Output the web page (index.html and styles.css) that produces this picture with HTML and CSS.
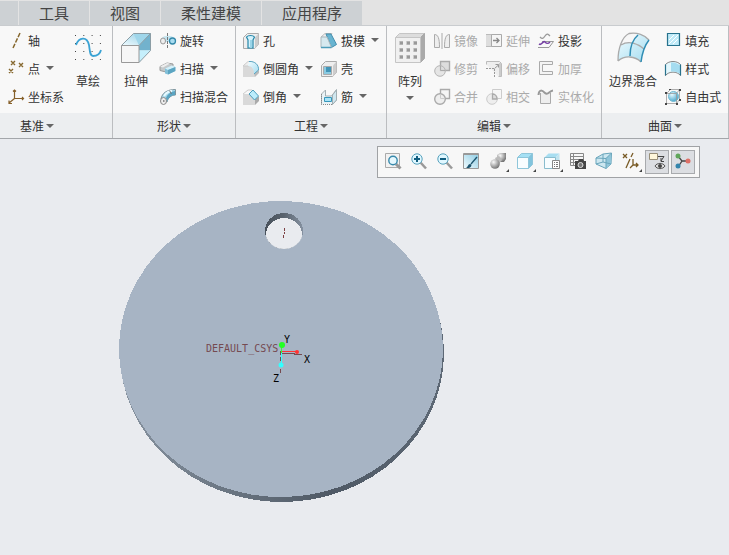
FILE: index.html
```
<!DOCTYPE html>
<html lang="zh-CN">
<head>
    <meta charset="UTF-8">
    <meta name="viewport" content="width=device-width, initial-scale=1.0">
    <title>零件建模</title>
    <link rel="stylesheet" href="styles.css">
</head>
<body>

<!-- Shared gradients -->
<svg class="defs" aria-hidden="true">
    <defs>
        <linearGradient id="blue" x1="0" y1="0" x2="1" y2="1">
            <stop offset="0" stop-color="#f2fcff"/>
            <stop offset="1" stop-color="#a2dcf0"/>
        </linearGradient>
        <linearGradient id="sky" x1="1" y1="0" x2="0" y2="1">
            <stop offset="0" stop-color="#8ccbe3"/>
            <stop offset="1" stop-color="#f2fcff"/>
        </linearGradient>
        <radialGradient id="ball" cx="0.35" cy="0.3" r="0.7">
            <stop offset="0" stop-color="#fafafa"/>
            <stop offset="1" stop-color="#777"/>
        </radialGradient>
        <radialGradient id="blue-ball" cx="0.35" cy="0.3" r="0.8">
            <stop offset="0" stop-color="#e6f9ff"/>
            <stop offset="1" stop-color="#3aa0c8"/>
        </radialGradient>
        <linearGradient id="edge">
            <stop offset="0" stop-color="#8793a0"/>
            <stop offset="0.65" stop-color="#4f5965"/>
            <stop offset="1" stop-color="#5d6875"/>
        </linearGradient>
        <linearGradient id="bore">
            <stop offset="0" stop-color="#48515b"/>
            <stop offset="0.5" stop-color="#59636e"/>
            <stop offset="1" stop-color="#8591a0"/>
        </linearGradient>
    </defs>
</svg>

<nav class="tabs">
    <button type="button" class="tab tab-cut" aria-label="上一个"></button>
    <button type="button" class="tab">工具</button>
    <button type="button" class="tab">视图</button>
    <button type="button" class="tab">柔性建模</button>
    <button type="button" class="tab">应用程序</button>
</nav>

<div class="ribbon">
    <section class="group group-cut">
        <div class="group-body">
            <div class="column">
                <button type="button" class="tool">
                    <svg class="icon" viewBox="0 0 16 16"><path d="M12 0L5 15" fill="none" stroke="#86682f" stroke-width="1.5" stroke-dasharray="4.5 1.5"/></svg>
                    轴
                </button>
                <button type="button" class="tool">
                    <svg class="icon" viewBox="0 0 16 16"><path d="M3 0l4 4M7 0l-4 4M11 2l4 4M15 2l-4 4M1 8l4 4M5 8l-4 4" stroke="#86682f" stroke-width="1.4"/></svg>
                    点<span class="caret"></span>
                </button>
                <button type="button" class="tool">
                    <svg class="icon" viewBox="0 0 16 16"><path d="M6.5 1v8.500H15M6.500 9.500L1 14M5 2.500L6.500 1 8 2.500M14 8l1.500 1.500L14 11M1 11.500v3h3" fill="none" stroke="#86602a" stroke-width="1.2"/></svg>
                    坐标系
                </button>
            </div>
            <button type="button" class="big">
                <svg class="big-icon" viewBox="0 0 30 30">
                    <path d="M2 2.500h26M2 10.500h26M2 18.500h26M2 26.500h26" stroke="#444" stroke-dasharray="1 7.300"/>
                    <path d="M3 12C6 4 14 3 16 12C17 19 17 23 20 23C24 23 27 21 28 17" fill="none" stroke="#3ba3d4" stroke-width="1.8"/>
                </svg>
                草绘
            </button>
        </div>
        <button type="button" class="group-title">基准<span class="caret"></span></button>
    </section>

    <section class="group">
        <div class="group-body">
            <button type="button" class="big">
                <svg class="big-icon" viewBox="0 0 30 30">
                    <path d="M.5 12.500L12.500.5h17L18 12.500z" fill="url(#sky)"/>
                    <path d="M12.500.5h17L18 12.500z" fill="#9fd6ea"/>
                    <path d="M29.500.5v17L18 17.500v-5z" fill="#72b2cd"/>
                    <path d="M18 17.500h11.500L18 29.500z" fill="#c5effc"/>
                    <path d="M.5 12.500L12.500.5h17v17L18 29.500M18 12.500L29.500.5" fill="none" stroke="#8b9da5"/>
                    <path d="M.5 12.500H18v17H.5z" fill="#f6f6f6" stroke="#999"/>
                </svg>
                拉伸
            </button>
            <div class="column">
                <button type="button" class="tool">
                    <svg class="icon" viewBox="0 0 16 16">
                        <path d="M2 5C4 2 12 2 14 5v4H2z" fill="#c4e4ef"/>
                        <ellipse cx="3" cy="8" rx="2.500" ry="3" fill="#eee" stroke="#999"/>
                        <circle cx="12.500" cy="8" r="3" fill="#a8dcf0" stroke="#3489aa" stroke-width="1.3"/>
                        <path d="M7.500 0v16" stroke="#777" stroke-dasharray="3 1"/>
                    </svg>
                    旋转
                </button>
                <button type="button" class="tool">
                    <svg class="icon" viewBox="0 0 16 16">
                        <path d="M0 5.500L7 2l6 1v3L6 8v3L0 9.500z" fill="#c4c9cb" stroke="#999"/>
                        <path d="M5 7.500l10-2V10l-7 3.500-3-1z" fill="#83c0d8"/>
                        <path d="M5 7.500l7-3 3.500 1.500L8 9z" fill="#d3f1fb"/>
                        <path d="M8 9l7.500-3v4L8 13.500z" fill="#5ca5c2"/>
                        <path d="M0 5.500L7 2l3 .5L3 6.500z" fill="#eee"/>
                    </svg>
                    扫描<span class="caret"></span>
                </button>
                <button type="button" class="tool">
                    <svg class="icon" viewBox="0 0 16 16">
                        <path d="M1 10C2 4 7 .5 15.500.5V6C11 6 8 9 7 13z" fill="#a9d9ea" stroke="#7d949d"/>
                        <path d="M6 9C7 6 10 3 15 2v4c-4 0-7 3-8 7z" fill="#5aa5c3"/>
                        <path d="M4 7C6 4 8 2 12 2" fill="none" stroke="#e8faff" stroke-width="2"/>
                        <path d="M9.500 1.500l2 3.500" stroke="#777"/>
                        <ellipse cx="3.500" cy="12" rx="3" ry="3.500" fill="#eee" stroke="#888"/>
                        <path d="M3 12h1.500" stroke="#333"/>
                    </svg>
                    扫描混合
                </button>
            </div>
        </div>
        <button type="button" class="group-title">形状<span class="caret"></span></button>
    </section>

    <section class="group">
        <div class="group-body">
            <div class="column">
                <button type="button" class="tool">
                    <svg class="icon" viewBox="0 0 16 16">
                        <path d="M.5 4.500l4-4h11v11l-4 4H.5z" fill="#eee" stroke="#aaa"/>
                        <path d="M12 4.500l3.500-4v11l-3.500 4z" fill="#ccc"/>
                        <path d="M3.500 4C5 2 10 2 11.500 4L10 7v8H5V7z" fill="#d3f2fc" stroke="#2687a9" stroke-width="1.2"/>
                        <path d="M8 7v8" stroke="#9cd5e8" stroke-width="2"/>
                    </svg>
                    孔
                </button>
                <button type="button" class="tool">
                    <svg class="icon" viewBox="0 0 16 16">
                        <path d="M0 5h8l4 5v6H0z" fill="#d9d9d9"/>
                        <path d="M11 12l5-4v4l-4 4z" fill="#bbb"/>
                        <path d="M0 5L5 .5h4L6 5z" fill="#eee" stroke="#ccc"/>
                        <path d="M6 .5C12 0 16 4 15.500 9L11 13C11 8 9 5 5 5z" fill="url(#blue)"/>
                        <path d="M6 .5C12 0 16 4 15.500 9L11 13" fill="none" stroke="#5ba6c2"/>
                    </svg>
                    倒圆角<span class="caret"></span>
                </button>
                <button type="button" class="tool">
                    <svg class="icon" viewBox="0 0 16 16">
                        <path d="M0 5h7l5 5v6H0z" fill="#d9d9d9"/>
                        <path d="M12 10l4-3v5l-4 4z" fill="#aaa"/>
                        <path d="M0 5L5 1h4" fill="none" stroke="#ccc"/>
                        <path d="M10 1l5.500 6-4 4L6 5z" fill="#bcecfb" stroke="#4c9ebc"/>
                    </svg>
                    倒角<span class="caret"></span>
                </button>
            </div>
            <div class="column">
                <button type="button" class="tool">
                    <svg class="icon" viewBox="0 0 16 16">
                        <path d="M0 4L4 .5h7L7 5z" fill="#eee" stroke="#bbb"/>
                        <path d="M5 1h5l5.500 10.500-5 3z" fill="#68b4d1" stroke="#438ead"/>
                        <path d="M0 4h6l4.500 10.500H0z" fill="#d6e9ef" stroke="#aab9be"/>
                        <path d="M0 14.500h10.500" stroke="#4d9dba" stroke-width="1.5"/>
                    </svg>
                    拔模<span class="caret"></span>
                </button>
                <button type="button" class="tool">
                    <svg class="icon" viewBox="0 0 16 16">
                        <path d="M.5 4.500l4-4h11v11l-4 4H.5z" fill="#eee" stroke="#aaa"/>
                        <path d="M12 4.500l3.500-4v11l-3.500 4z" fill="#ccc"/>
                        <path d="M2.500 5.500h8v8h-8z" fill="#8acae1" stroke="#aaa"/>
                        <path d="M5 6h5v5H5z" fill="#4395b7"/>
                    </svg>
                    壳
                </button>
                <button type="button" class="tool">
                    <svg class="icon" viewBox="0 0 16 16">
                        <path d="M.5 15.500V5l4-4v6h6l5-6.500V11l-4 4.500" fill="#e9f2f5" stroke="#a3afb3"/>
                        <path d="M11.500 15.500V6l4-5v10z" fill="#d0e7ef" stroke="#a3afb3"/>
                        <path d="M.5 5v10.500h11" fill="none" stroke="#888" stroke-dasharray="1 1"/>
                        <path d="M3.500 8.500h7v4h-7z" fill="#a8e3f7" stroke="#3797ba"/>
                    </svg>
                    筋<span class="caret"></span>
                </button>
            </div>
        </div>
        <button type="button" class="group-title">工程<span class="caret"></span></button>
    </section>

    <section class="group">
        <div class="group-body">
            <button type="button" class="big">
                <svg class="big-icon" viewBox="0 0 30 30">
                    <path d="M.5 4.500l4-4h25l-4 4z" fill="#ddd" stroke="#c5c5c5"/>
                    <path d="M25.500 4.500l4-4v25l-4 4z" fill="#aaa" stroke="#aaa"/>
                    <path d="M.5 4.500h25v25H.5z" fill="#f0f0f0" stroke="#c5c5c5"/>
                    <path d="M4 10h18M4 17h18M4 24h18" stroke="#ccc" stroke-width="4" stroke-dasharray="4 3"/>
                    <path d="M5 10h17M5 17h17M5 24h17" stroke="#999" stroke-width="3" stroke-dasharray="3 4"/>
                </svg>
                阵列<span class="caret"></span>
            </button>
            <div class="column">
                <button type="button" class="tool" disabled>
                    <svg class="icon" viewBox="0 0 16 16"><path d="M.5 1.500C4 1.500 5.500 5 5.500 14.500h-5zM15.500 1.500C12 1.500 10.500 5 10.500 14.500h5z" fill="#eee" stroke="#aaa"/><path d="M8 0v16" stroke="#aaa"/></svg>
                    镜像
                </button>
                <button type="button" class="tool" disabled>
                    <svg class="icon" viewBox="0 0 16 16"><path d="M6.500.5h9v9h-9z" fill="#ddd" stroke="#aaa" stroke-width="1.4"/><circle cx="6" cy="10" r="5.300" fill="#ddd" fill-opacity=".7" stroke="#b5b5b5"/><path d="M6.500 5v4.500H11" fill="none" stroke="#aaa"/></svg>
                    修剪
                </button>
                <button type="button" class="tool" disabled>
                    <svg class="icon" viewBox="0 0 16 16"><path d="M6.500.5h9v9h-9z" fill="#f5f5f5" stroke="#aaa" stroke-width="1.4"/><circle cx="6" cy="10" r="5.300" fill="#eee" stroke="#aaa" stroke-width="1.4"/><path d="M6.500 5v4.500H11" fill="none" stroke="#ccc"/></svg>
                    合并
                </button>
            </div>
            <div class="column">
                <button type="button" class="tool" disabled>
                    <svg class="icon" viewBox="0 0 16 16"><path d="M0 1.500h6M0 13.500h6" stroke="#bbb"/><path d="M0 2h5v11H0z" fill="#ddd"/><path d="M5.500 1.500h10v12h-10z" fill="#f5f5f5" stroke="#aaa"/><path d="M7 7.500h6M10.500 5l2.500 2.500-2.500 2.500" fill="none" stroke="#888" stroke-width="1.3"/></svg>
                    延伸
                </button>
                <button type="button" class="tool" disabled>
                    <svg class="icon" viewBox="0 0 16 16"><path d="M.5 3.500v-3h13l2 2v13h-3" fill="#eee" stroke="#bbb"/><path d="M13 2h2v13h-2z" fill="#ccc"/><path d="M0 7.500h8.500V16" fill="none" stroke="#999" stroke-dasharray="2 1"/><path d="M8.500 7.500L12.500 4M9.500 3.500h3v3" fill="none" stroke="#999"/></svg>
                    偏移
                </button>
                <button type="button" class="tool" disabled>
                    <svg class="icon" viewBox="0 0 16 16"><path d="M6.500.5h9v9h-9z" fill="#f6f6f6" stroke="#ccc"/><circle cx="6" cy="10" r="5.300" fill="#eee" stroke="#ccc"/><path d="M6.500 5v5H11C11 7 9 5 6.500 5z" fill="#ddd" stroke="#aaa" stroke-width="1.3"/></svg>
                    相交
                </button>
            </div>
            <div class="column">
                <button type="button" class="tool">
                    <svg class="icon" viewBox="0 0 16 16">
                        <path d="M2 4C4 6 5 6 7 3S10 1 12 3" fill="none" stroke="#999" stroke-width="1.3"/>
                        <path d="M4 8.500h11.500L11 14.500H0" fill="none" stroke="#999"/>
                        <path d="M1 11C4 13 5 7 7 9S10 11 12 9" fill="none" stroke="#7640a5" stroke-width="1.6"/>
                    </svg>
                    投影
                </button>
                <button type="button" class="tool" disabled>
                    <svg class="icon" viewBox="0 0 16 16"><path d="M14.500.5H1.500v13h13v-3h-10v-7h10z" fill="#f4f4f4" stroke="#aaa"/></svg>
                    加厚
                </button>
                <button type="button" class="tool" disabled>
                    <svg class="icon" viewBox="0 0 16 16"><path d="M2.500 4v10.500h10V4" fill="#eee" stroke="#aaa"/><path d="M.5 6C1 0 4 1 7 4S11 2 15 1.500" fill="none" stroke="#999" stroke-width="2"/></svg>
                    实体化
                </button>
            </div>
        </div>
        <button type="button" class="group-title">编辑<span class="caret"></span></button>
    </section>

    <section class="group">
        <div class="group-body">
            <button type="button" class="big">
                <svg class="big-icon" viewBox="0 0 30 30">
                    <path d="M0 28C0 15 4 4 11 .5C19-1 27 2 31 7C27 12 24 21 23 29C17 23 7 22 0 28z" fill="url(#blue)"/>
                    <path d="M2 13C5 6 8 1 11 .5C15 0 17 1 20 2L14 10C10 9 6 10 2 13z" fill="#f7f7f7"/>
                    <path d="M0 28C0 15 4 4 11 .5C19-1 27 2 31 7M0 28C7 22 17 23 23 29M3 12C11 7 20 11 26 16" fill="none" stroke="#aaa" stroke-width="1.3"/>
                    <path d="M20 2C14 7 12 16 12 23M31 7C27 12 24 21 23 29" fill="none" stroke="#2f8db4" stroke-width="1.5"/>
                </svg>
                边界混合
            </button>
            <div class="column">
                <button type="button" class="tool">
                    <svg class="icon" viewBox="0 0 16 16"><path d="M2.500.5h12v12h-12z" fill="#bfeaf8" stroke="#28728d" stroke-width="1.2"/><path d="M4 7l5-5M4 11l9-9M8 11l5-5" stroke="#fff"/></svg>
                    填充
                </button>
                <button type="button" class="tool">
                    <svg class="icon" viewBox="0 0 16 16"><path d="M.5 3.500C4-.5 12-.5 15.500 3.500v11C12 10 4 10 .5 14.500z" fill="#e3f7fd" stroke="#888"/><path d="M6 1.500c4-.5 7 1 9 3V13c-2-2-5-2.500-9-2.500z" fill="#a5dcf0"/><path d="M.5 14.500v-11M15.500 14.500v-11" stroke="#28728d" stroke-width="1.2"/></svg>
                    样式
                </button>
                <button type="button" class="tool">
                    <svg class="icon" viewBox="0 0 16 16"><circle cx="8.500" cy="7.500" r="5" fill="url(#blue-ball)" stroke="#72b9d2"/><path d="M1.500 4.500h10v10h-10zM1.500 4.500l4-4h9v10l-3 4M11.500 4.500l3-4" fill="none" stroke="#999" stroke-width=".8"/><path d="M0 3h2v2H0zM0 14h2v2H0zM11 14h2v2h-2zM14 0h2v2h-2zM4 0h2v1H4zM14 10h2v2h-2z" fill="#444"/></svg>
                    自由式
                </button>
            </div>
        </div>
        <button type="button" class="group-title">曲面<span class="caret"></span></button>
    </section>
</div>

<main class="viewport">
    <div class="view-toolbar">
        <button type="button" class="view-button" aria-label="重新调整">
            <svg class="icon" viewBox="0 0 16 16"><path d="M.5.5h14v14H.5z" fill="#f2f2f2" stroke="#aaa"/><path d="M11 11l4.500 4.500" stroke="#999" stroke-width="3"/><circle cx="8" cy="7.500" r="4.200" fill="#e6f8fe" stroke="#3889ab" stroke-width="1.4"/></svg>
        </button>
        <button type="button" class="view-button" aria-label="放大">
            <svg class="icon" viewBox="0 0 16 16"><path d="M9.500 9.500l5.500 6" stroke="#999" stroke-width="2.500"/><circle cx="6" cy="6" r="5.200" fill="#e0f7ff" stroke="#58a2bd"/><path d="M3 6h6M6 3v6" stroke="#125e80" stroke-width="2"/></svg>
        </button>
        <button type="button" class="view-button" aria-label="缩小">
            <svg class="icon" viewBox="0 0 16 16"><path d="M9.500 9.500l5.500 6" stroke="#999" stroke-width="2.500"/><circle cx="6" cy="6" r="5.200" fill="#e0f7ff" stroke="#58a2bd"/><path d="M3 6h6" stroke="#125e80" stroke-width="2"/></svg>
        </button>
        <button type="button" class="view-button" aria-label="重画">
            <svg class="icon" viewBox="0 0 16 16"><path d="M.5.5h15v15H.5z" fill="url(#sky)" stroke="#999"/><path d="M1 1.500h14" stroke="#999"/><path d="M8 11l6-7" fill="none" stroke="#1c536d" stroke-width="1.3"/><path d="M3 15c2-1 2-4 4-4s2 3-1 4z" fill="#1c536d"/></svg>
        </button>
        <button type="button" class="view-button has-menu" aria-label="显示样式">
            <svg class="icon" viewBox="0 0 16 16"><path d="M7 2l3-2h6v6l-2 3H7z" fill="url(#ball)"/><path d="M5 5l4-2 3 4-4 5z" fill="#bbb"/><circle cx="5" cy="11" r="4.800" fill="url(#ball)"/></svg>
        </button>
        <button type="button" class="view-button has-menu" aria-label="已保存方向">
            <svg class="icon" viewBox="0 0 16 16"><path d="M.5 4.500l4-4h11l-4 4z" fill="#a5e0f4"/><path d="M11.500 4.500l4-4v11l-4 4z" fill="#82c4dd"/><path d="M.5 4.500h11v11H.5zM.5 4.500l4-4h11v11l-4 4M11.500 4.500l4-4" fill="none" stroke="#8fc6da"/><path d="M1 5h10v10H1z" fill="#f8fdff"/></svg>
        </button>
        <button type="button" class="view-button has-menu" aria-label="视图管理器">
            <svg class="icon" viewBox="0 0 16 16"><path d="M.5 4.500l4-4h11l-4 4z" fill="#a8def1"/><path d="M11.500 4.500l4-4v11l-4 4z" fill="#c0e4f0"/><path d="M.5 4.500h11v11H.5z" fill="#f8fdff" stroke="#8abdce"/><path d="M8.500 7.500h7v8h-7z" fill="#fff" stroke="#888"/><path d="M10 9.500h1M12 9.500h2M10 11.500h1M12 11.500h2M10 13.500h1M12 13.500h2" stroke="#777"/></svg>
        </button>
        <button type="button" class="view-button" aria-label="视图快照">
            <svg class="icon" viewBox="0 0 16 16"><path d="M.5.5h13v12H.5zM.5 3.500h13M.5 6.500h13M.5 9.500h13M3.500.5v12" fill="none" stroke="#888"/><path d="M5 8h3l1-2h4l1 2h2v8H5z" fill="#444"/><circle cx="10.500" cy="12" r="2.500" fill="#777" stroke="#ddd"/></svg>
        </button>
        <button type="button" class="view-button" aria-label="透视图">
            <svg class="icon" viewBox="0 0 16 16"><path d="M0 5L7 1l8.500-1L15 11l-5 4.500L0 11z" fill="#cde7f0" stroke="#69a5bb"/><path d="M10 5l5-4v10l-5 4z" fill="#8fc5d9"/><path d="M0 5l10 .5v10M10 5.500L15.500 0M0 11l7-2 8 2M7 9V1" fill="none" stroke="#69a5bb"/></svg>
        </button>
        <button type="button" class="view-button has-menu" aria-label="基准显示过滤器">
            <svg class="icon" viewBox="0 0 16 16"><path d="M0 1l4 4M4 1L0 5M10 0L8 4M7 6L3 15M10 6v6h5M10 12l-3 3M13 10l2 2-2 2" fill="none" stroke="#785a25" stroke-width="1.3"/></svg>
        </button>
        <button type="button" class="view-button active" aria-label="注释显示" aria-pressed="true">
            <svg class="icon" viewBox="0 0 16 16"><path d="M.5.5h8v6h-8z" fill="#fff7db" stroke="#998f78"/><path d="M9 3.500h6L12 8M12 5v3.500h3" fill="none" stroke="#444"/><path d="M6 13C8 9.500 14 9.500 16 13C14 16.500 8 16.500 6 13z" fill="#ddd" stroke="#555"/><circle cx="11" cy="13" r="2" fill="#444"/></svg>
        </button>
        <button type="button" class="view-button active" aria-label="旋转中心" aria-pressed="true">
            <svg class="icon" viewBox="0 0 16 16"><path d="M3 3l4 5-4 6M7 8h6" fill="none" stroke="#444" stroke-width="1.3"/><circle cx="3" cy="3" r="2.500" fill="#60a65b"/><circle cx="3" cy="13" r="2.500" fill="#3485ac"/><circle cx="13" cy="8" r="2.500" fill="#de7067"/></svg>
        </button>
    </div>

    <svg class="model" viewBox="0 0 326 304" role="img" aria-label="零件模型">
        <g shape-rendering="crispEdges">
            <!-- Disc: side wall, then front face -->
            <ellipse cx="163" cy="153" rx="162" ry="149" fill="url(#edge)"/>
            <ellipse cx="162" cy="149" rx="162" ry="148" fill="#a7b4c4"/>
            <!-- Through hole -->
            <clipPath id="hole"><ellipse cx="165" cy="31" rx="19" ry="18"/></clipPath>
            <ellipse cx="165" cy="31" rx="19" ry="18" fill="url(#bore)"/>
            <ellipse cx="165" cy="35" rx="18" ry="17" fill="#e9ebef" clip-path="url(#hole)"/>
            <path d="M165.500 28v3M165.500 32v2M164.500 35v3" stroke="#7b3f42"/>
            <!-- Datum axes and spin centre -->
            <path d="M162 153.500h14M175 154.500h8" stroke="#754a50"/>
            <path d="M161.500 151v23" stroke="#754a50" stroke-dasharray="4 2"/>
            <path d="M162 151.500h15" stroke="#f33"/>
            <path d="M162.500 146v7" stroke="#3f3"/>
            <path d="M162.500 153v11" stroke="#3ff"/>
        </g>
        <circle cx="163" cy="145" r="3" fill="#2f2"/>
        <circle cx="178" cy="152" r="2" fill="#f33"/>
        <circle cx="162" cy="165" r="2.500" fill="#3ff"/>
        <text class="csys-name" x="87" y="152">DEFAULT_CSYS</text>
        <text class="axis-name" x="165" y="143">Y</text>
        <text class="axis-name" x="185" y="163">X</text>
        <text class="axis-name" x="154" y="182">Z</text>
    </svg>
</main>

</body>
</html>
```
FILE: styles.css
```
* {
    box-sizing: border-box;
}

body {
    margin: 0;
    min-height: 100vh;
    display: flex;
    flex-direction: column;
    font-family: "Noto Sans CJK SC", sans-serif;
    font-size: 12px;
    line-height: 16px;
    color: #333;
    background-color: #e9ebef;
}

button {
    margin: 0;
    padding: 0;
    border: none;
    background: none;
    font: inherit;
    color: inherit;
    white-space: nowrap;
    cursor: pointer;
}

.defs {
    position: absolute;
    width: 0;
    height: 0;
}

/* Tabs */
.tabs {
    display: flex;
    gap: 1px;
    height: 26px;
    padding-top: 1px;
    background-color: #e3e3e3;
    border-bottom: 1px solid #c9cccf;
}

.tab {
    padding: 0 20px;
    font-size: 15px;
    line-height: 24px;
    color: #444;
    background-color: #cdd1d4;
}

.tab-cut {
    width: 18px;
    padding: 0;
}

/* Ribbon */
.ribbon {
    display: flex;
    background-color: #f8f8f8;
    border-bottom: 1px solid #a3a6aa;
}

.group {
    display: flex;
    flex-direction: column;
    border-right: 1px solid #bbbdc0;
}

.group-body {
    display: flex;
    gap: 8px;
    padding: 1px 7px 2px;
}

.column {
    display: flex;
    flex-direction: column;
}

.tool {
    display: flex;
    align-items: center;
    gap: 4px;
    height: 28px;
}

.tool:disabled {
    color: #aaa;
    cursor: default;
}

.tool .caret {
    margin-left: 2px;
    margin-bottom: 2px;
}

.icon {
    flex: none;
    width: 16px;
    height: 16px;
    overflow: visible;
}

.big {
    display: flex;
    flex-direction: column;
    align-items: center;
    min-width: 32px;
    padding-top: 6px;
}

.big-icon {
    width: 30px;
    height: 30px;
    margin-bottom: 10px;
    overflow: visible;
}

.big .caret {
    margin-top: 7px;
}

.caret {
    border: 4px solid transparent;
    border-top-color: #666;
    border-bottom: none;
}

.group-title {
    display: flex;
    justify-content: center;
    align-items: center;
    gap: 2px;
    height: 25px;
    background-color: #eceef0;
}

/* The first group runs off the left side of the window */
.group-cut .group-body {
    padding-left: 8px;
    padding-right: 8px;
}

.group-cut .group-title {
    padding-right: 38px;
}

/* Graphics area */
.viewport {
    position: relative;
    flex: 1;
    padding: 61px 0 0 119px;
}

.view-toolbar {
    position: absolute;
    top: 7px;
    right: 29px;
    display: flex;
    gap: 2px;
    padding: 3px 4px 3px 3px;
    background-color: #f7f7f7;
    border: 1px solid #a0a2a5;
}

.view-button {
    position: relative;
    display: flex;
    justify-content: center;
    align-items: center;
    width: 24px;
    height: 24px;
    padding-bottom: 2px;
}

.view-button.has-menu {
    width: 25px;
}

.has-menu::after {
    content: "";
    position: absolute;
    right: 1px;
    bottom: 2px;
    border-left: 3px solid transparent;
    border-bottom: 3px solid #444;
}

.view-button.active {
    background-color: #dcdee2;
    border: 1px solid #a8aaad;
}

.model {
    display: block;
    width: 326px;
    height: 304px;
}

.csys-name,
.axis-name {
    font-family: "DejaVu Sans Mono", monospace;
    font-size: 10px;
}

.csys-name {
    fill: #754a50;
}

.axis-name {
    fill: #000;
}
```
